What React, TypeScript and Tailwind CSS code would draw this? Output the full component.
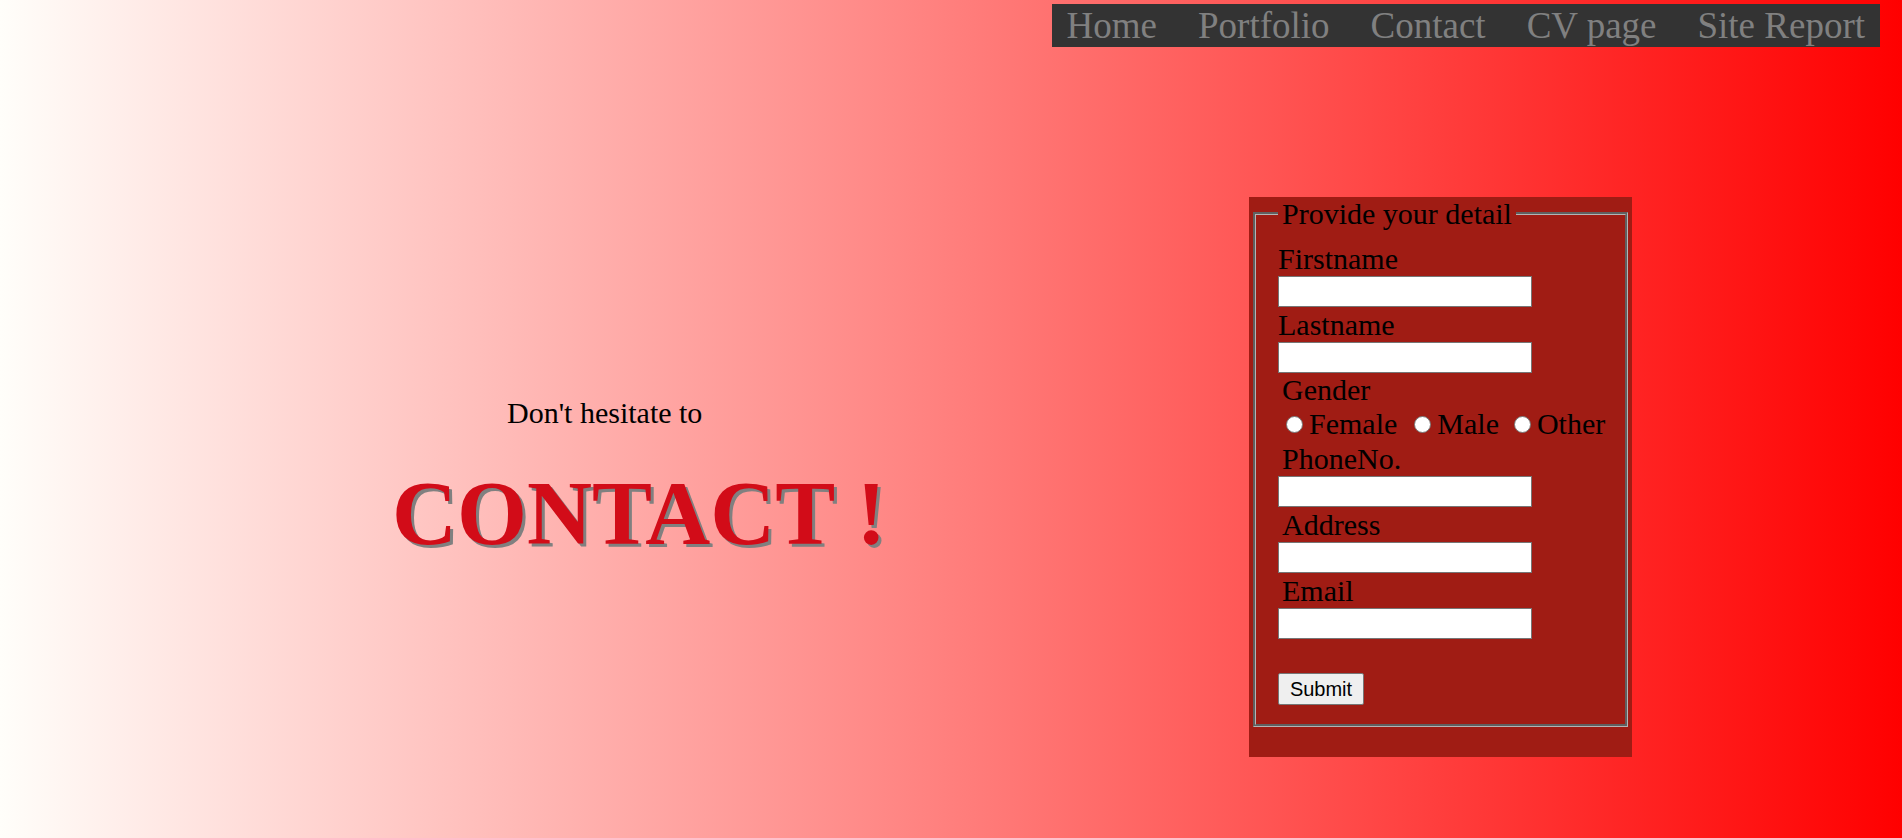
import {useState} from "react";

const navLinks = ["Home", "Portfolio", "Contact", "CV page", "Site Report"];

export default function App() {
  const [gender, setGender] = useState<string>("");

  return (
    <div className="h-[838px] w-full overflow-hidden bg-[linear-gradient(to_right,#fffefa,#ff0000)] font-['Liberation_Serif',serif] text-black">
      {/* ── Top nav ──────────────────────────────────────────────── */}
      <nav className="flex justify-end pt-[4px] pr-[22px]">
        <ul className="flex gap-[41px] bg-[#333333] px-[15px] text-[37px] leading-[43px] text-[#808080]">
          {navLinks.map((link) => (
            <li key={link}>
              <a href="#" className="whitespace-nowrap">
                {link}
              </a>
            </li>
          ))}
        </ul>
      </nav>

      <div className="flex">
        {/* ── Left: headline ───────────────────────────────────── */}
        <div className="w-[1208px] pt-[349px]">
          <p className="pl-[507px] text-[30px] leading-[33px]">
            Don't hesitate to
          </p>
          <h1 className="mt-[35px] pl-[392px] text-[90px] font-bold leading-[100px] whitespace-nowrap text-[#d20c18] [text-shadow:3px_3px_0_#808080]">
            CONTACT !
          </h1>
        </div>

        {/* ── Right: form ──────────────────────────────────────── */}
        <div className="ml-[41px] mt-[150px] h-[560px] w-[383px] bg-[#a01c14] px-[4px] pb-[31px]">
          <form onSubmit={(e) => e.preventDefault()}>
            <fieldset className="border-[3px] border-[#b4b4b4] [border-style:groove] pb-[19px] pl-[22px] text-[30px]">
              <legend className="px-[4px] leading-[33px]">
                Provide your detail
              </legend>

              <div className="mt-[11px]">
                <label className="block h-[35px] leading-[35px]">Firstname</label>
                <TextInput />
                <label className="block h-[35px] leading-[35px]">Lastname</label>
                <TextInput />

                <p className="h-[33px] pl-[4px] leading-[33px]">Gender</p>
                <div className="flex h-[35px] items-center pl-[8px] leading-[35px]">
                  {["Female", "Male", "Other"].map((g, i) => (
                    <label
                      key={g}
                      className={`flex items-center ${i === 0 ? "" : i === 1 ? "ml-[17px]" : "ml-[15px]"}`}>
                      <input
                        type="radio"
                        name="gender"
                        checked={gender === g}
                        onChange={() => setGender(g)}
                        className="mt-[2px] h-[17px] w-[17px] appearance-none rounded-full border border-[#767676] bg-white checked:border-[5px] checked:border-[#0075ff]"
                      />
                      <span className="ml-[6px]">{g}</span>
                    </label>
                  ))}
                </div>

                <label className="block h-[35px] pl-[4px] leading-[35px]">PhoneNo.</label>
                <TextInput />
                <label className="block h-[35px] pl-[4px] leading-[35px]">Address</label>
                <TextInput />
                <label className="block h-[35px] pl-[4px] leading-[35px]">Email</label>
                <TextInput />

                <button
                  type="submit"
                  className="mt-[34px] block h-[32px] w-[86px] rounded-[2px] border border-[#767676] bg-[#efefef] font-['Liberation_Sans',sans-serif] text-[20px] leading-none">
                  Submit
                </button>
              </div>
            </fieldset>
          </form>
        </div>
      </div>
    </div>
  );
}

function TextInput() {
  return (
    <input
      type="text"
      className="block h-[31px] w-[254px] border border-[#767676] bg-white px-1 text-[16px] outline-none"
    />
  );
}
